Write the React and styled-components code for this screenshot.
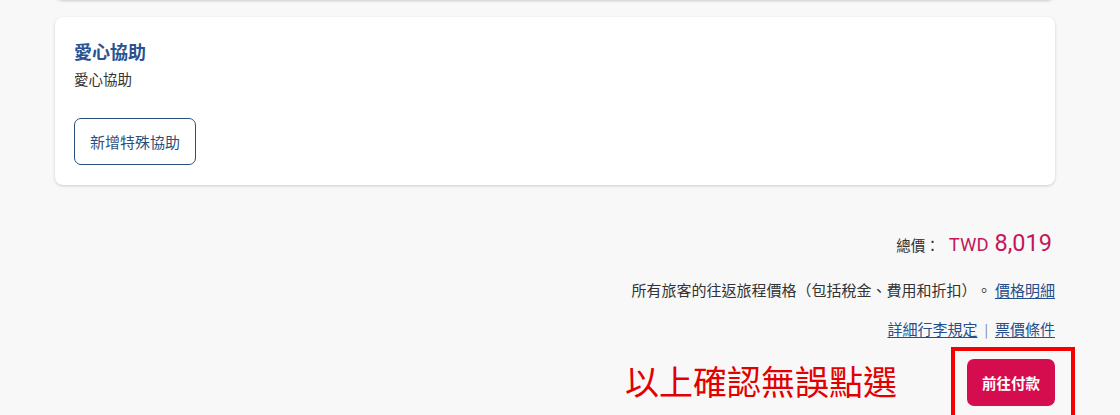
import styled, { createGlobalStyle } from "styled-components";

const GlobalStyle = createGlobalStyle`
  html, body {
    margin: 0;
    padding: 0;
    background: #f8f8f8;
    overflow: hidden;
  }
  body {
    font-family: "Noto Sans CJK TC", "Noto Sans", sans-serif;
    color: #333;
    text-spacing-trim: space-all;
  }
`;

const Page = styled.div`
  width: 1120px;
  height: 415px;
  padding: 0 65px 0 55px;
  box-sizing: border-box;
  display: flex;
  flex-direction: column;
  & > * {
    flex-shrink: 0;
  }
`;

const Card = styled.div`
  background: #fff;
  border-radius: 8px;
  box-shadow: 0 1px 3px rgba(0, 0, 0, 0.18);
  box-sizing: border-box;
`;

const PrevCard = styled(Card)`
  height: 60px;
  margin-top: -60px;
`;

const AssistCard = styled(Card)`
  margin-top: 17px;
  height: 168px;
  padding: 21px 19px 20px;
  display: flex;
  flex-direction: column;
  align-items: flex-start;
`;

const Title = styled.h3`
  margin: 0;
  font-size: 18px;
  line-height: 26px;
  font-weight: 700;
  color: #2a5291;
`;

const Sub = styled.p`
  margin: 4px 0 0;
  font-size: 14.5px;
  line-height: 22px;
  color: #333;
`;

const OutlineButton = styled.button`
  margin-top: auto;
  height: 47px;
  padding: 0 15px;
  background: #fff;
  border: 1px solid #2b4f7b;
  border-radius: 7px;
  font-family: inherit;
  font-size: 15px;
  color: #2b4f7b;
`;

const Summary = styled.div`
  display: flex;
  flex-direction: column;
  align-items: flex-end;
  margin-top: 44px;
`;

const TotalRow = styled.div`
  display: flex;
  align-items: baseline;
  padding-right: 3px;
  height: 29px;
`;

const Label = styled.span`
  font-size: 14.5px;
  color: #333;
  margin-right: 9px;
`;

const Currency = styled.span`
  font-family: Roboto, sans-serif;
  font-size: 18.5px;
  color: #c2185b;
  margin-right: 6px;
`;

const Amount = styled.span`
  font-family: Roboto, sans-serif;
  font-size: 23.5px;
  color: #c2185b;
`;

const InfoLine = styled.div`
  font-size: 15px;
  line-height: 22px;
  color: #333;
  margin-top: ${(p) => p.$gap}px;
`;

const TextLink = styled.a`
  color: #254f8c;
  text-decoration: underline;
  text-underline-offset: 2px;
  cursor: pointer;
`;

const Sep = styled.span`
  color: #6b7a90;
  margin: 0 7px;
  font-size: 13px;
`;

const ActionRow = styled.div`
  display: flex;
  align-items: center;
  margin-top: 6px;
  margin-right: -20px;
`;

const Note = styled.span`
  font-size: 34px;
  line-height: 40px;
  color: #e30000;
  margin-right: 54px;
`;

const Highlight = styled.div`
  border: 4px solid #f50000;
  border-bottom: none;
  padding: 8px 16px 10px 12px;
  height: 68px;
  box-sizing: border-box;
`;

const PayButton = styled.button`
  height: 47px;
  padding: 0 15px;
  background: #d50c4d;
  border: none;
  border-radius: 7px;
  color: #fff;
  font-family: inherit;
  font-size: 14.5px;
  font-weight: 700;
`;

export default function App() {
  return (
    <>
      <GlobalStyle />
      <Page>
        <PrevCard />
        <AssistCard>
          <Title>愛心協助</Title>
          <Sub>愛心協助</Sub>
          <OutlineButton>新增特殊協助</OutlineButton>
        </AssistCard>
        <Summary>
          <TotalRow>
            <Label>總價：</Label>
            <Currency>TWD</Currency>
            <Amount>8,019</Amount>
          </TotalRow>
          <InfoLine $gap={21}>
            所有旅客的往返旅程價格（包括稅金、費用和折扣）。 <TextLink>價格明細</TextLink>
          </InfoLine>
          <InfoLine $gap={17}>
            <TextLink>詳細行李規定</TextLink>
            <Sep>|</Sep>
            <TextLink>票價條件</TextLink>
          </InfoLine>
          <ActionRow>
            <Note>以上確認無誤點選</Note>
            <Highlight>
              <PayButton>前往付款</PayButton>
            </Highlight>
          </ActionRow>
        </Summary>
      </Page>
    </>
  );
}
